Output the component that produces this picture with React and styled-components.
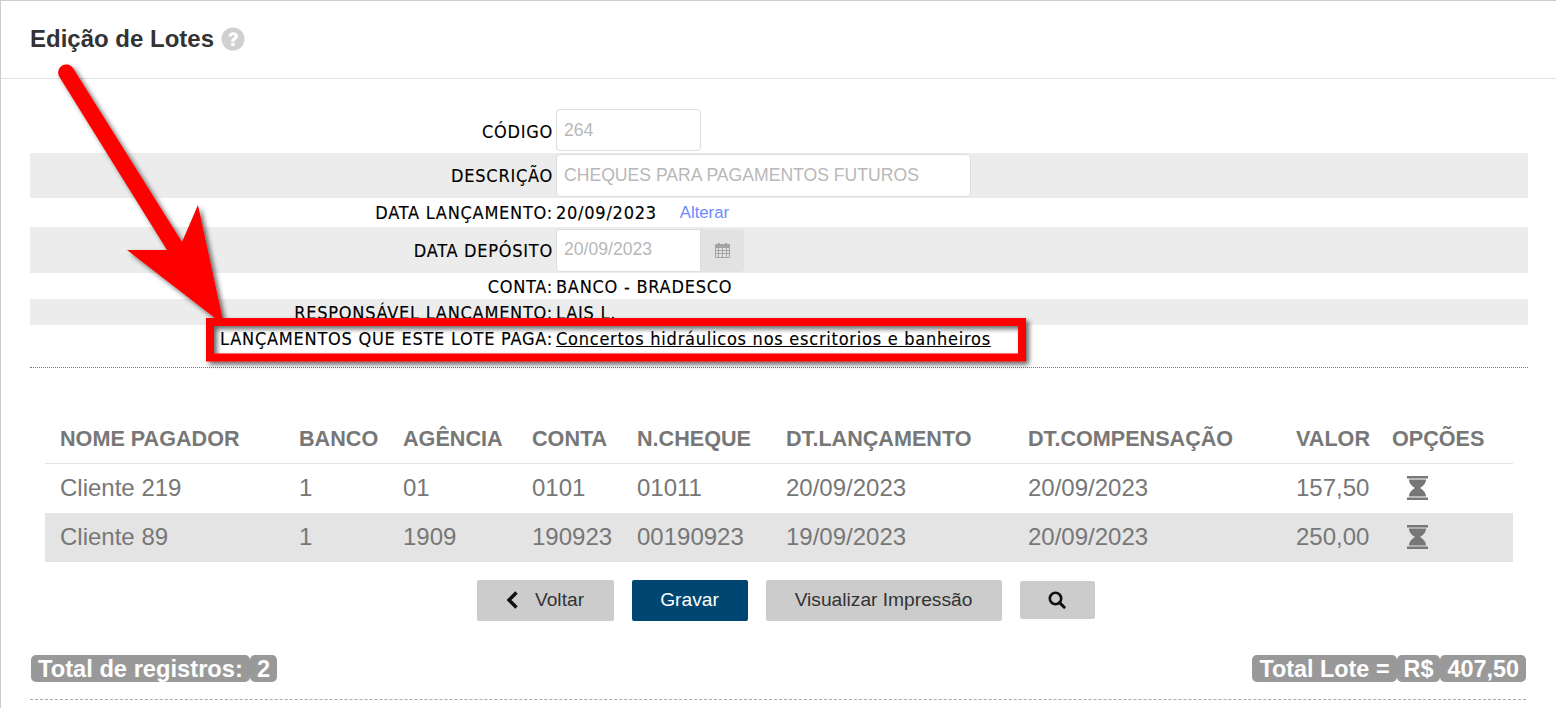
import React from 'react';
import styled, { createGlobalStyle } from 'styled-components';

const GlobalStyle = createGlobalStyle`
    html, body {
        margin: 0;
        padding: 0;
        background: #fff;
    }
    body {
        font-family: "Liberation Sans", Arial, sans-serif;
    }
`;

const Page = styled.div`
    position: relative;
    width: 1556px;
    height: 708px;
    overflow: hidden;
    box-sizing: border-box;
    border-top: 1px solid #ccc;
    border-left: 1px solid #ccc;
`;

const Header = styled.header`
    display: flex;
    align-items: center;
    gap: 7px;
    height: 78px;
    box-sizing: border-box;
    padding: 0 0 2px 29px;
    border-bottom: 1px solid #e2e2e2;
`;

const Title = styled.h1`
    margin: 0;
    font-size: 24px;
    font-weight: bold;
    color: #333;
`;

const Body = styled.div`
    padding: 30px 28px 0 29px;
`;

const Form = styled.div`
    height: 258px;
    border-bottom: 1px dotted #777;
`;

const Row = styled.div`
    display: grid;
    grid-template-columns: 523px 1fr;
    column-gap: 3px;
    align-items: ${p => (p.$tall ? 'center' : 'start')};
    height: ${p => p.$height}px;
    box-sizing: border-box;
    padding-top: ${p => p.$pad || 0}px;
    background: ${p => (p.$shade ? '#ececec' : '#fff')};
    overflow: hidden;
    font-family: "DejaVu Sans Condensed", "DejaVu Sans", sans-serif;
    font-size: 18px;
    letter-spacing: 0.75px;
    -webkit-text-stroke: 0.15px #000;
    color: #000;
`;

const Label = styled.div`
    text-align: right;
    white-space: nowrap;
    line-height: 26px;
    padding-top: ${p => p.$pad || 0}px;
`;

const Value = styled.div`
    display: flex;
    align-items: center;
    gap: 23px;
    line-height: 26px;
    white-space: nowrap;
`;

const Underlined = styled.span`
    text-decoration: underline;
`;

const ChangeLink = styled.a`
    font-family: "Liberation Sans", Arial, sans-serif;
    font-size: 16.7px;
    letter-spacing: 0;
    -webkit-text-stroke: 0;
    color: #6a8cff;
`;

const Input = styled.div`
    width: ${p => p.$width}px;
    height: ${p => p.$height}px;
    box-sizing: border-box;
    padding: 0 7px ${p => p.$lift}px;
    display: flex;
    align-items: center;
    background: #fff;
    border: 1px solid #ddd;
    border-radius: ${p => (p.$addon ? '4px 0 0 4px' : '4px')};
    font-family: "Liberation Sans", Arial, sans-serif;
    font-size: 17.6px;
    letter-spacing: 0;
    -webkit-text-stroke: 0;
    color: #b8b8b8;
`;

const InputGroup = styled.div`
    display: flex;
`;

const Addon = styled.div`
    width: 43px;
    display: flex;
    align-items: center;
    justify-content: center;
    background: #e2e2e2;
    border-radius: 0 4px 4px 0;
`;

const TableWrap = styled.div`
    padding: 45px 15px 0;
`;

const Table = styled.table`
    width: 1468px;
    table-layout: fixed;
    border-collapse: collapse;
    font-size: 24px;
    color: #777;
`;

const Th = styled.th`
    width: ${p => p.$width}px;
    height: 50px;
    box-sizing: border-box;
    padding: 2px 0 0 15px;
    text-align: left;
    font-size: 21.6px;
    font-weight: bold;
    white-space: nowrap;
    border-bottom: 1px solid #e2e2e2;
`;

const Tr = styled.tr`
    height: ${p => p.$height}px;
    background: ${p => (p.$shade ? '#e4e4e4' : '#fff')};
`;

const Td = styled.td`
    padding: 0 0 ${p => (p.$shade ? 2 : 0)}px 15px;
    white-space: nowrap;
`;

const IconCell = styled.td`
    padding: 5px 0 0 30px;
`;

const Buttons = styled.div`
    display: flex;
    justify-content: center;
    align-items: center;
    gap: 18px;
    padding: 18px 0 0 13px;
`;

const Button = styled.button`
    display: flex;
    align-items: center;
    justify-content: center;
    gap: 16px;
    width: ${p => p.$width}px;
    height: 41px;
    padding: 0 0 2px;
    border: 0;
    border-radius: 2px;
    background: ${p => (p.$primary ? '#004672' : '#ccc')};
    color: ${p => (p.$primary ? '#fff' : '#333')};
    font-family: "Liberation Sans", Arial, sans-serif;
    font-size: 19.2px;
`;

const SearchButton = styled(Button)`
    height: 38px;
    padding: 0;
    margin-bottom: 1px;
`;

const Totals = styled.div`
    display: flex;
    justify-content: space-between;
    margin-right: 2px;
    padding: 34px 0 0 1px;
    height: 44px;
    border-bottom: 1px dashed #aaa;
`;

const BadgeGroup = styled.div`
    display: flex;
    height: 27px;
`;

const Badge = styled.span`
    display: block;
    padding: 0 7px;
    background: #999;
    border-radius: 5px;
    color: #fff;
    font-size: ${p => p.$size || 23.4}px;
    font-weight: bold;
    line-height: 28px;
    height: 27px;
    white-space: nowrap;
`;

const Annotation = styled.svg`
    position: absolute;
    top: -1px;
    left: -1px;
    pointer-events: none;
`;

const HelpIcon = () => (
    <svg width="24" height="24" viewBox="0 0 24 24">
        <circle cx="12" cy="12" r="11.5" fill="#d0d0d0" />
        <path d="M7.4 9.4c.3-2.6 2.2-4.2 4.8-4.2 2.7 0 4.7 1.6 4.7 3.9 0 1.8-1 2.8-2.2 3.6-1 .7-1.3 1.1-1.3 2.1h-3.2c0-2 .6-2.9 1.8-3.8 1-.7 1.6-1.1 1.6-1.8 0-.8-.6-1.2-1.3-1.2-.9 0-1.5.6-1.6 1.5z" fill="#fff" />
        <rect x="10.2" y="15.8" width="3.4" height="3.2" fill="#fff" />
    </svg>
);

const CalendarIcon = () => (
    <svg width="15" height="16" viewBox="0 0 15 16" fill="#a4a4a4">
        <path fillRule="evenodd" d="M1 2h2V1h2v1h5V1h2v1h2a1 1 0 0 1 1 1v12a1 1 0 0 1-1 1H1a1 1 0 0 1-1-1V3a1 1 0 0 1 1-1zm0 4v2h2V6zm3 0v2h3V6zm4 0v2h3V6zm4 0v2h2V6zM1 9v2h2V9zm3 0v2h3V9zm4 0v2h3V9zm4 0v2h2V9zM1 12v3h2v-3zm3 0v3h3v-3zm4 0v3h3v-3zm4 0v3h2v-3z" />
    </svg>
);

const Hourglass = () => (
    <svg width="21" height="24" viewBox="0 0 21 24" fill="#777">
        <rect x="0" y="0" width="21" height="2.5" />
        <rect x="0" y="21.5" width="21" height="2.5" />
        <path d="M2 3.5h17c0 4-3 6.5-6 8.5 3 2 6 4.5 6 8.5H2c0-4 3-6.5 6-8.5-3-2-6-4.5-6-8.5z" />
    </svg>
);

const ChevronLeft = () => (
    <svg width="13" height="18" viewBox="0 0 13 18">
        <path d="M10.5 1.5 3 9l7.5 7.5" fill="none" stroke="#111" strokeWidth="3.4" />
    </svg>
);

const SearchIcon = () => (
    <svg width="18" height="18" viewBox="0 0 18 18">
        <circle cx="7.5" cy="7.5" r="5.7" fill="none" stroke="#111" strokeWidth="2.6" />
        <path d="m11.6 11.6 4.6 4.6" stroke="#111" strokeWidth="3" strokeLinecap="round" />
    </svg>
);

// red marker drawn on top of the screenshot
const RedMarker = () => (
    <Annotation width="1556" height="708" viewBox="0 0 1556 708">
        <defs>
            <filter id="shade" x="-5%" y="-5%" width="110%" height="110%">
                <feDropShadow dx="3" dy="3" stdDeviation="2.5" floodColor="#000" floodOpacity="0.6" />
            </filter>
        </defs>
        <g filter="url(#shade)">
            <path d="M59.5 77 A8 8 0 0 1 73 68 L182 242 L198 205 L224 325 L127 250 L167 250 Z" fill="#f00" />
            <rect x="210" y="322" width="812" height="35.5" fill="none" stroke="#f00" strokeWidth="8" />
        </g>
    </Annotation>
);

const rows = [
    ['Cliente 219', '1', '01', '0101', '01011', '20/09/2023', '20/09/2023', '157,50'],
    ['Cliente 89', '1', '1909', '190923', '00190923', '19/09/2023', '20/09/2023', '250,00'],
];

const columns = [
    ['NOME PAGADOR', 239],
    ['BANCO', 104],
    ['AGÊNCIA', 129],
    ['CONTA', 105],
    ['N.CHEQUE', 149],
    ['DT.LANÇAMENTO', 242],
    ['DT.COMPENSAÇÃO', 268],
    ['VALOR', 96],
    ['OPÇÕES', 136],
];

const App = () => {
    return (
        <>
            <GlobalStyle />
            <Page>
                <Header>
                    <Title>Edição de Lotes</Title>
                    <HelpIcon />
                </Header>
                <Body>
                    <Form>
                        <Row $height={44}>
                            <Label $pad={10}>CÓDIGO</Label>
                            <Input $width={145} $height={42} $lift={0}>264</Input>
                        </Row>
                        <Row $height={45} $shade $tall>
                            <Label $pad={1}>DESCRIÇÃO</Label>
                            <Input $width={415} $height={43} $lift={1}>CHEQUES PARA PAGAMENTOS FUTUROS</Input>
                        </Row>
                        <Row $height={29} $pad={2}>
                            <Label>DATA LANÇAMENTO:</Label>
                            <Value>20/09/2023 <ChangeLink>Alterar</ChangeLink></Value>
                        </Row>
                        <Row $height={46} $shade $tall>
                            <Label $pad={1}>DATA DEPÓSITO</Label>
                            <InputGroup>
                                <Input $width={145} $height={43} $lift={2} $addon>20/09/2023</Input>
                                <Addon><CalendarIcon /></Addon>
                            </InputGroup>
                        </Row>
                        <Row $height={26} $pad={1}>
                            <Label>CONTA:</Label>
                            <Value>BANCO - BRADESCO</Value>
                        </Row>
                        <Row $height={26} $shade $pad={1}>
                            <Label>RESPONSÁVEL LANÇAMENTO:</Label>
                            <Value>LAIS L.</Value>
                        </Row>
                        <Row $height={28} $pad={1}>
                            <Label>LANÇAMENTOS QUE ESTE LOTE PAGA:</Label>
                            <Value><Underlined>Concertos hidráulicos nos escritorios e banheiros</Underlined></Value>
                        </Row>
                    </Form>
                    <TableWrap>
                        <Table>
                            <thead>
                                <tr>
                                    {columns.map(([name, width]) => (
                                        <Th key={name} $width={width}>{name}</Th>
                                    ))}
                                </tr>
                            </thead>
                            <tbody>
                                {rows.map((row, i) => (
                                    <Tr key={row[0]} $shade={i === 1} $height={i === 1 ? 49 : 50}>
                                        {row.map((cell, j) => <Td key={j} $shade={i === 1}>{cell}</Td>)}
                                        <IconCell><Hourglass /></IconCell>
                                    </Tr>
                                ))}
                            </tbody>
                        </Table>
                    </TableWrap>
                    <Buttons>
                        <Button $width={137}><ChevronLeft />Voltar</Button>
                        <Button $width={116} $primary>Gravar</Button>
                        <Button $width={236}>Visualizar Impressão</Button>
                        <SearchButton $width={75}><SearchIcon /></SearchButton>
                    </Buttons>
                    <Totals>
                        <BadgeGroup>
                            <Badge $size={23.7}>Total de registros:</Badge>
                            <Badge $size={23.7}>2</Badge>
                        </BadgeGroup>
                        <BadgeGroup>
                            <Badge>Total Lote =</Badge>
                            <Badge>R$</Badge>
                            <Badge>407,50</Badge>
                        </BadgeGroup>
                    </Totals>
                </Body>
                <RedMarker />
            </Page>
        </>
    );
};

export default App;
